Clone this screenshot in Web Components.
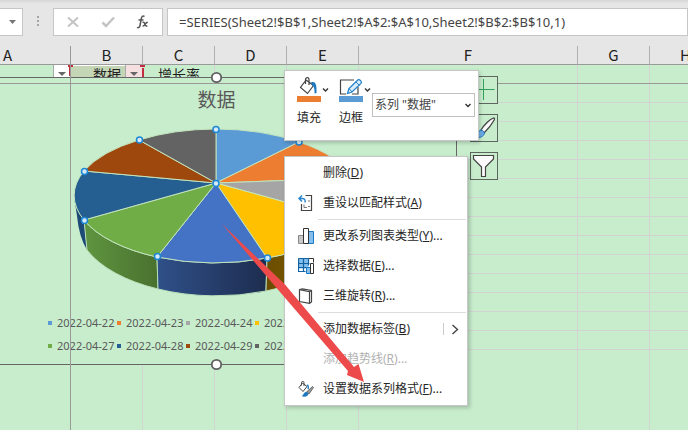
<!DOCTYPE html>
<html lang="zh-CN">
<head>
<meta charset="utf-8">
<title>Sheet2</title>
<style>
html, body { height: 100%; margin: 0; }
body { font: 12px/18px "Noto Sans", "Noto Sans CJK SC", sans-serif; color: #262626; overflow: hidden; }
</style>
</head>
<body>
<sheet-app></sheet-app>
<script>
function define(name, html) {
  const t = document.createElement('template');
  t.innerHTML = html;
  customElements.define(name, class extends HTMLElement {
    constructor() {
      super();
      this.attachShadow({ mode: 'open' }).appendChild(t.content.cloneNode(true));
    }
  });
}

define('formula-bar', `
<style>
:host { display: flex; gap: 4px; padding: 8px 0; height: 30px; align-items: flex-start; background: linear-gradient(#d6d6d6, #e6e6e6 4px); }
.box { height: 28px; box-sizing: border-box; border: 1px solid #c6c6c6; background: #fff; display: flex; align-items: center; }
.name { width: 23px; border-left: 0; padding: 0 0 0 8px; }
.dots { width: 22px; height: 28px; display: flex; align-items: center; justify-content: center; }
.tools { width: 110px; justify-content: space-around; padding: 0 2px; }
button { border: 0; background: none; padding: 0; display: flex; }
input { flex: 1; min-width: 0; padding: 0 0 0 11px; outline: 0; font: 13px/20px "Noto Sans", sans-serif; color: #444; }
</style>
<button class="box name" aria-label="名称框"><svg width="9" height="6" viewBox="0 0 9 6"><path d="M1 1h7L4.500 5z" fill="#777"/></svg></button>
<span class="dots"><svg width="3" height="12" viewBox="0 0 3 12" fill="#a6a6a6"><path d="M0 0h2v2H0zM0 4h2v2H0zM0 8h2v2H0z"/></svg></span>
<div class="box tools">
<button aria-label="取消"><svg width="14" height="14" viewBox="0 0 14 14" fill="none" stroke="#c4c4c4" stroke-width="2"><path d="M2 2.500l10 9M12 2.500l-10 9"/></svg></button>
<button aria-label="输入"><svg width="14" height="14" viewBox="0 0 14 14" fill="none" stroke="#c4c4c4" stroke-width="2.500"><path d="M1.500 7.500l3.500 3.500 8-8.500"/></svg></button>
<button aria-label="插入函数"><svg width="14" height="14" viewBox="0 0 14 14" fill="none" stroke="#555" stroke-width="1.500"><path d="M8.500 1.500C6.500 .3 5.600 1.700 5.200 4L4 10.500c-.4 2-1.500 2.600-3 1.900M2.500 5h5"/><path d="M6.500 7.500c1.500-.8 2 .2 2.400 1.600s1 2.600 2.400 1.600M11.800 7.300c-1.500 0-2.200 1.200-2.700 2s-1.200 1.800-2.500 1.600"/></svg></button>
</div>
<input class="box" aria-label="公式" value="=SERIES(Sheet2!$B$1,Sheet2!$A$2:$A$10,Sheet2!$B$2:$B$10,1)">
`);

define('filter-button', `
<style>
:host { display: block; width: 17px; height: 18px; background: var(--fill, #fff); border-left: 1px solid #aaa; box-sizing: border-box; }
button { border: 0; padding: 0; background: none; width: 100%; height: 100%; display: flex; align-items: center; justify-content: center; }
</style>
<button aria-label="筛选"><svg width="8" height="5" viewBox="0 0 8 5"><path d="M0 0h8L4 4z" fill="#666"/></svg></button>
`);

define('sheet-grid', `
<style>
:host { display: block; overflow: hidden; background: #c8edcd; }
table { table-layout: fixed; width: 722px; height: 100%; border-collapse: separate; border-spacing: 0; }
th, td { box-sizing: border-box; padding: 0; border-right: 1px solid #d3d3d3; overflow: hidden; }
tr { height: 19px; }
td { border-bottom: 1px solid #d3d3d3; line-height: 0; }
th { background: #e6e6e6; color: #222; font: 15px/18px "Noto Sans CJK SC", sans-serif; border-bottom: 1px solid #999; border-right-color: #b0b0b0; }
th:first-child { text-align: left; padding-left: 3px; }
th:first-child, td:first-child { border-right-color: #999; }
tr.head td { border-bottom-color: #999; font-size: 14px; line-height: 20px; color: #222; }
.head div { display: flex; justify-content: flex-end; height: 18px; }
.head .label { flex: 1; text-align: right; padding-right: 4px; }
.sel { background: #c5d6b7; box-shadow: inset 0 1px #fff; }
.sel filter-button { --fill: #f5dfe0; }
.tail { height: auto; }
.tail td { border-bottom: 0; }
</style>
<table>
<colgroup><col style="width:71px"><col style="width:72px"><col style="width:72px"><col style="width:72px"><col style="width:72px"><col style="width:219px"><col style="width:72px"><col style="width:72px"></colgroup>
<thead><tr><th>A</th><th>B</th><th>C</th><th>D</th><th>E</th><th>F</th><th>G</th><th>H</th></tr></thead>
<tbody>
<tr class="head"><td><div><filter-button></filter-button></div></td><td class="sel"><div><span class="label">数据</span><filter-button></filter-button></div></td><td><div><span class="label" style="padding-right:14px">增长率</span></div></td><td></td><td></td><td></td><td></td><td></td></tr>
</tbody>
</table>
`);
customElements.define('sheet-rows', class extends HTMLElement {
  constructor() {
    super();
    this.attachShadow({ mode: 'open' }).innerHTML = '<style>:host{display:contents}</style><sheet-grid style="height:100%"></sheet-grid>';
    const body = this.shadowRoot.querySelector('sheet-grid').shadowRoot.querySelector('tbody');
    const cells = '<td></td>'.repeat(8);
    body.insertAdjacentHTML('beforeend', ('<tr>' + cells + '</tr>').repeat(14) + '<tr class="tail">' + cells + '</tr>');
  }
});

define('legend-item', `
<style>
:host { display: flex; align-items: center; gap: 5px; white-space: nowrap; }
i { flex: none; width: 4px; height: 4px; background: var(--c); }
</style>
<i></i><slot></slot>
`);

define('pie-chart', `
<style>
:host { display: block; box-sizing: border-box; background: #c8edcd; border: 1px solid #666; border-left: 0; overflow: hidden; color: #595959; }
h2 { margin: 7px 0 0; padding-right: 23px; text-align: center; font: 19px/28px "Noto Sans CJK SC", sans-serif; }
svg { display: block; margin-top: 9px; }
.legend { display: grid; grid-template-columns: repeat(4, 69px); row-gap: 5px; padding-left: 48px; margin-top: 14px; font: 11px/18px "Noto Sans", sans-serif; }
</style>
<h2>数据</h2>
<svg width="400" height="178" viewBox="0 122 400 178">
<defs>
<linearGradient id="g"><stop stop-color="#5f9540"/><stop offset="1" stop-color="#49712f"/></linearGradient>
<linearGradient id="b"><stop stop-color="#2f5089"/><stop offset="1" stop-color="#1d2d4f"/></linearGradient>
<linearGradient id="y"><stop stop-color="#6b4d00"/><stop offset="1" stop-color="#8c6600"/></linearGradient>
</defs>
<g stroke="#b9dfba">
<path stroke="none" fill="#1d4a76" d="M74 196L77 216Q79 237 87 250L84 220A142 67 0 0 1 74 196z"/>
<path fill="url(#g)" d="M84 220A142 67 0 0 0 157 257L158 289A138 73 0 0 1 87 250z"/>
<path fill="url(#b)" d="M157 257A142 67 0 0 0 267 258L266 291A138 73 0 0 1 158 289z"/>
<path fill="url(#y)" d="M267 258A142 67 0 0 0 348 220L345 250A138 73 0 0 1 266 291z"/>
</g>
<g stroke="#c3e4bd" stroke-linejoin="round">
<path fill="#5b9bd5" d="M216 183V129A142 67 0 0 1 299 142z"/>
<path fill="#ed7d31" d="M216 183L299 142A142 67 0 0 1 353 178z"/>
<path fill="#a5a5a5" d="M216 183L353 178A142 67 0 0 1 350 220z"/>
<path fill="#ffc000" d="M216 183L350 220A142 67 0 0 1 267 258z"/>
<path fill="#4472c4" d="M216 183L267 258A142 67 0 0 1 157 257z"/>
<path fill="#70ad47" d="M216 183L157 257A142 67 0 0 1 84 220z"/>
<path fill="#255e91" d="M216 183L84 220A142 67 0 0 1 84 171z"/>
<path fill="#9e480e" d="M216 183L84 171A142 67 0 0 1 139 140z"/>
<path fill="#636363" d="M216 183L139 140A142 67 0 0 1 216 129z"/>
</g>
<g fill="#d5eaf6" stroke="#1b87d6" stroke-width="1.500">
<circle cx="216" cy="129.500" r="3"/><circle cx="299" cy="142" r="3"/><circle cx="139.500" cy="140" r="3"/><circle cx="84.500" cy="171.500" r="3"/><circle cx="84.500" cy="220.500" r="3"/><circle cx="157.500" cy="256.500" r="3"/><circle cx="267.500" cy="258" r="3"/><circle cx="216" cy="183.500" r="3"/>
</g>
</svg>
<div class="legend">
<legend-item style="--c:#5b9bd5">2022-04-22</legend-item><legend-item style="--c:#ed7d31">2022-04-23</legend-item><legend-item style="--c:#a5a5a5">2022-04-24</legend-item><legend-item style="--c:#ffc000">2022-04-25</legend-item>
<legend-item style="--c:#70ad47">2022-04-27</legend-item><legend-item style="--c:#255e91">2022-04-28</legend-item><legend-item style="--c:#9e480e">2022-04-29</legend-item><legend-item style="--c:#636363">2022-04-30</legend-item>
</div>
`);

define('side-button', `
<style>
:host { display: block; }
button { display: block; width: 28px; height: 28px; padding: 0; border: 1px solid #5c665e; background: #c8edcd; }
</style>
<button><slot></slot></button>
`);

define('side-tools', `
<style>:host { display: flex; flex-direction: column; gap: 10px; } svg { display: block; }</style>
<side-button><svg width="26" height="26" viewBox="0 0 26 26" stroke="#34a058"><path d="M2.500 12.500h21M12.500 2v21"/></svg></side-button>
<side-button><svg width="26" height="26" viewBox="0 0 26 26"><path d="M10 15C13 10 19 4 22.500 3c1 0 1.200.7.700 2C21 9 17 14 13 18z" fill="#fafafa" stroke="#444" stroke-width="1.300"/><path d="M4 22c3 0 2-5 5-6.500 2.500-1 5 1.500 4 4C11.500 22.500 7 23 4 22z" fill="#6eaee6" stroke="#2177c7"/></svg></side-button>
<side-button><svg width="26" height="26" viewBox="0 0 26 26"><path d="M2.500 2.500h20v3.500L14.500 14v9.500h-4V14L2.500 6z" fill="#fafafa" stroke="#444" stroke-width="1.200"/></svg></side-button>
`);

define('mini-toolbar', `
<style>
:host { display: flex; box-sizing: border-box; align-items: flex-start; padding: 6px 3px 13px 11px; background: #fff; border: 1px solid #c6c6c6; box-shadow: 1px 2px 4px #0003; }
button { border: 0; background: none; padding: 0; width: 34px; font: inherit; color: inherit; text-align: left; }
button:first-of-type { margin-right: 8px; }
button svg { display: block; margin-bottom: 7px; }
span { display: block; padding-left: 1px; }
label { position: relative; flex: 1; margin-top: 16px; display: flex; }
select { appearance: none; width: 100%; height: 24px; border: 1px solid #c0c0c0; border-radius: 0; background: #fff; padding: 0 0 0 2px; font: inherit; color: #444; }
label svg { position: absolute; right: 3px; top: 10px; }
</style>
<button><svg width="34" height="25" viewBox="0 0 34 25"><path d="M1 19h24v6H1z" fill="#ed7d31"/><path d="M10 3L4.500 10.500l7 6 6-8L10 3M9.500 7V2.500c0-2.500 3.500-2.500 3.500 0V8" fill="#fff" stroke="#444" stroke-width="1.200"/><path d="M15 5.500c4-1.500 6 1 5.500 10.500l-2 .5c.2-4-.3-7-2-8z" fill="#1b78c2"/><path d="M27 11.500l2.500 2.500 2.500-2.500" fill="none" stroke="#333" stroke-width="1.400"/></svg><span>填充</span></button>
<button><svg width="34" height="25" viewBox="0 0 34 25"><path d="M1 19h24v6H1z" fill="#5b9bd5"/><path d="M16 3H2.500v14H8M20 10v7h-6" fill="none" stroke="#444" stroke-width="1.200"/><path d="M9.500 16.500l1.500-5L20 2.800c1.500-1 4.500 2 3 3.600L14 15z" fill="#d9edfb" stroke="#2382cc" stroke-width="1.300"/><path d="M11 11.500l3 3.500M18 5l3.500 3.500" stroke="#2382cc"/><path d="M27 11.500l2.500 2.500 2.500-2.500" fill="none" stroke="#333" stroke-width="1.400"/></svg><span>边框</span></button>
<label><select aria-label="图表元素"><option>系列 "数据"</option></select><svg width="8" height="5" viewBox="0 0 8 5"><path d="M1.500 1L4 3.500 6.500 1" fill="none" stroke="#333" stroke-width="1.400"/></svg></label>
`);

define('menu-item', `
<style>
:host { display: block; }
button { display: flex; align-items: center; width: 100%; height: 30px; padding: 0 7px 0 13px; border: 0; background: none; font: inherit; color: inherit; text-align: left; white-space: nowrap; }
.icon { width: 16px; height: 16px; margin-right: 9px; }
.text { flex: 1; }
:host([disabled]) { color: #b1b1b1; }
</style>
<button><span class="icon"><slot name="icon"></slot></span><span class="text"><slot></slot></span><slot name="more"></slot></button>
`);

define('context-menu', `
<style>
:host { display: block; box-sizing: border-box; padding: 1px 0 1px; background: #fff; border: 1px solid #c6c6c6; box-shadow: 2px 2px 4px #0003; }
hr { border: 0; height: 1px; background: #dcdcdc; margin: 1px 1px 1px 33px; }
svg { display: block; }
</style>
<menu-item>删除(<u>D</u>)</menu-item>
<menu-item><svg slot="icon" width="16" height="16" viewBox="0 0 16 16" fill="none"><path d="M7.500 .5h6v15h-10V9" stroke="#444" stroke-width="1.200"/><path d="M1 3.500h3.500c2.500 0 3 2 2.500 4M4 .5l-3 3 3 3" stroke="#2382cc" stroke-width="1.400"/><path d="M6 9.500v3h3M10 6h2M10 11.500h2" stroke="#777"/></svg>重设以匹配样式(<u>A</u>)</menu-item>
<hr>
<menu-item><svg slot="icon" width="16" height="16" viewBox="0 0 16 16"><path d="M.5 7.500h5v8h-5z" fill="#c8c8c8" stroke="#888"/><path d="M10.500 3.500h5v12h-5z" fill="#83beec" stroke="#1b78c2"/><path d="M5.500 .5h5v15h-5z" fill="#fff" stroke="#333"/></svg>更改系列图表类型(<u>Y</u>)...</menu-item>
<menu-item><svg slot="icon" width="16" height="16" viewBox="0 0 16 16"><path d="M.5 .5h10v10H.5z" fill="#83beec"/><path d="M10.500 .5h5v4" fill="none" stroke="#333"/><path d="M.5 .5h10v5M.5 .5v13h7M.5 5.500h11M.5 9.500h8M5.500 .5v13M10.500 .5v7" fill="none" stroke="#1261a0" stroke-width="1.200"/><path d="M8.500 9.500h4v6h-4z" fill="#83beec" stroke="#1b78c2"/><path d="M12.500 5.500h3v10h-3z" fill="#fff" stroke="#333"/></svg>选择数据(<u>E</u>)...</menu-item>
<menu-item><svg slot="icon" width="16" height="16" viewBox="0 0 16 16" fill="#fff" stroke="#444" stroke-width="1.200"><path d="M1.500 1.500L4.500 .8l9 1.700v11.500l-2 1.300-10-1.800z"/><path d="M1.500 1.700l10 2v11.500M11.500 3.700l2-1.200"/></svg>三维旋转(<u>R</u>)...</menu-item>
<hr>
<menu-item>添加数据标签(<u>B</u>)<svg slot="more" width="18" height="14" viewBox="0 0 18 14" fill="none"><path d="M1.500 1v12" stroke="#ccc"/><path d="M10.500 3l5 4.500-5 4.500" stroke="#444" stroke-width="1.400"/></svg></menu-item>
<menu-item disabled>添加趋势线(<u>R</u>)...</menu-item>
<menu-item><svg slot="icon" width="16" height="16" viewBox="0 0 16 16"><path d="M4.500 2L1 6.500 5 10.500l4-5zM3.500 4.500V1.500c0-1.500 2.500-1.500 2.500 0V5" fill="#fff" stroke="#444"/><path d="M9 4c1.500.5 1.500 2.500 1 4" fill="none" stroke="#2382cc" stroke-width="1.500"/><path d="M8.500 11l6-5.500 1 1-4.500 6.500z" fill="#999" stroke="#555" stroke-width=".8"/><path d="M3.500 15c2 0 2-4 4.500-4 2.500.3 3 2.500 1 4-1.500 1-4 1-5.500 0z" fill="#1b78c2"/></svg>设置数据系列格式(<u>F</u>)...</menu-item>
`);

define('sheet-app', `
<style>
:host { display: flex; flex-direction: column; height: 100%; position: relative; overflow: hidden; }
.sheet { flex: 1; min-height: 0; position: relative; }
.chart { position: absolute; left: 0; top: 31px; width: 457px; height: 288px; }
.freeze { position: absolute; left: 0; top: 37px; right: 0; height: 1px; background: #999; }
.freeze.v { left: 70px; top: 0; right: auto; width: 1px; height: 100%; }
.handle { position: absolute; left: 210px; top: 25px; }
.handle.b { top: 312px; }
.mark { position: absolute; left: 68px; top: 19px; }
.tools { position: absolute; left: 470px; top: 30px; }
mini-toolbar { position: absolute; left: 284px; top: 24px; width: 195px; }
context-menu { position: absolute; left: 284px; top: 110px; width: 184px; }
.arrow { position: absolute; left: 220px; top: 176px; pointer-events: none; }
</style>
<formula-bar></formula-bar>
<div class="sheet">
<sheet-rows></sheet-rows>
<svg class="mark" width="77" height="12" viewBox="0 0 77 12"><path d="M0 0h5v2H0zM1 2h2v9H1zM72 0h5v2h-5zM74 3h2v9h-2z" fill="#bf2f3f"/></svg>
<pie-chart class="chart"></pie-chart>
<div class="freeze"></div><div class="freeze v"></div>
<svg class="handle" width="13" height="13" viewBox="0 0 13 13"><circle cx="6.500" cy="6.500" r="4.700" fill="#fff" stroke="#606060" stroke-width="1.800"/></svg>
<svg class="handle b" width="13" height="13" viewBox="0 0 13 13"><circle cx="6.500" cy="6.500" r="4.700" fill="#fff" stroke="#606060" stroke-width="1.800"/></svg>
<side-tools class="tools"></side-tools>
<mini-toolbar></mini-toolbar>
<context-menu></context-menu>
<svg class="arrow" width="150" height="164" viewBox="220 222 150 164"><path fill="#ed4b4b" d="M222 224L285 284.500L354 367L358.500 364L364 382L347 375L348 371L280 292z"/></svg>
</div>
`);
</script>
</body>
</html>
